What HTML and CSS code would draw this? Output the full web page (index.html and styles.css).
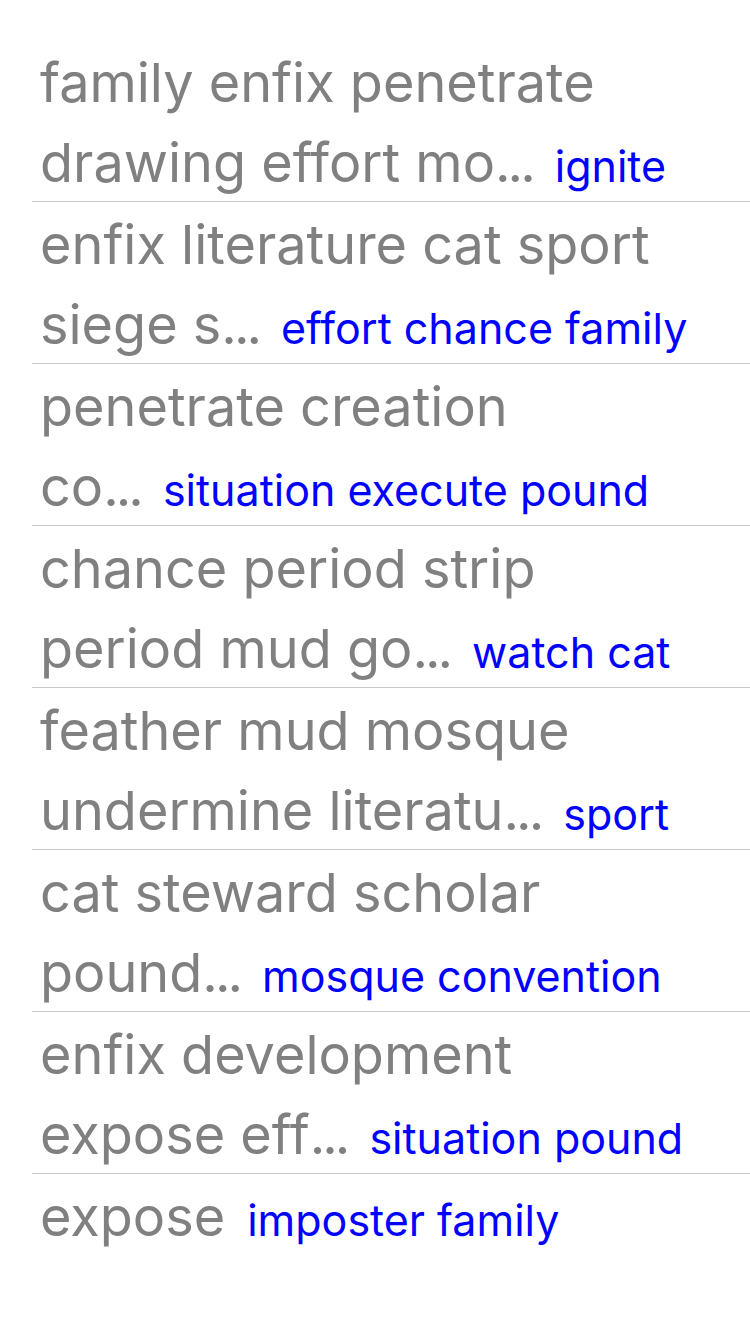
FILE: index.html
```html
<!DOCTYPE html>
<html>
<head>
<meta charset="utf-8">
<link rel="stylesheet" href="styles.css">
</head>
<body>
<div class="list">
  <div class="row">
    <div class="line"><span class="title">family enfix penetrate</span></div>
    <div class="line second"><span class="title">drawing effort mo<span class="dots">...</span></span><span class="tag">ignite</span></div>
  </div>
  <div class="row">
    <div class="line"><span class="title">enfix literature cat sport</span></div>
    <div class="line second"><span class="title">siege s<span class="dots">...</span></span><span class="tag">effort chance family</span></div>
  </div>
  <div class="row">
    <div class="line"><span class="title">penetrate creation</span></div>
    <div class="line second"><span class="title">co<span class="dots">...</span></span><span class="tag">situation execute pound</span></div>
  </div>
  <div class="row">
    <div class="line"><span class="title">chance period strip</span></div>
    <div class="line second"><span class="title">period mud go<span class="dots">...</span></span><span class="tag">watch cat</span></div>
  </div>
  <div class="row">
    <div class="line"><span class="title">feather mud mosque</span></div>
    <div class="line second"><span class="title">undermine literatu<span class="dots">...</span></span><span class="tag">sport</span></div>
  </div>
  <div class="row">
    <div class="line"><span class="title">cat steward scholar</span></div>
    <div class="line second"><span class="title">pound<span class="dots">...</span></span><span class="tag">mosque convention</span></div>
  </div>
  <div class="row">
    <div class="line"><span class="title">enfix development</span></div>
    <div class="line second"><span class="title">expose eff<span class="dots">...</span></span><span class="tag">situation pound</span></div>
  </div>
  <div class="row last">
    <div class="line"><span class="title">expose</span><span class="tag">imposter family</span></div>
  </div>
</div>
</body>
</html>
```
FILE: styles.css
```css
html, body {
  margin: 0;
  padding: 0;
  background: #ffffff;
}
body {
  width: 750px;
  font-family: Inter, "Noto Sans", sans-serif;
}
.list {
  padding-top: 40px;
  margin-left: 32px;
}
.row {
  display: flex;
  flex-direction: column;
  padding: 3px 0 0 8px;
  height: 162px;
  box-sizing: border-box;
  border-bottom: 1px solid #c8c8c8;
}
.row.last {
  border-bottom: none;
}
.line {
  display: flex;
  align-items: baseline;
  gap: 22px;
  height: 80px;
  line-height: 80px;
  white-space: nowrap;
}
.line.second {
  height: 78px;
}
.title {
  font-size: 54px;
  color: #808080;
}
.dots {
  letter-spacing: -3px;
}
.tag {
  font-size: 43px;
  color: #0000ff;
}
```
